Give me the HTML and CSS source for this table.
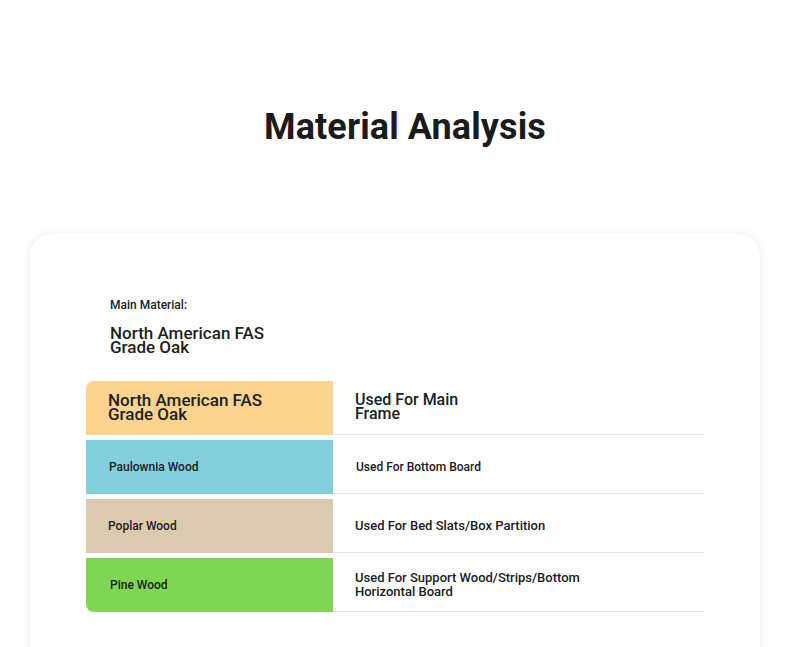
FILE: index.html
```html
<!DOCTYPE html>
<html lang="en">
<head>
<meta charset="utf-8">
<title>Material Analysis</title>
<link rel="stylesheet" href="styles.css">
</head>
<body>
<header class="hero">
  <h1 class="hero-title">Material Analysis</h1>
</header>
<section class="card">
  <div class="main">
    <p class="main-label">Main Material:</p>
    <p class="main-name">North American FAS<br>Grade Oak</p>
  </div>
  <div class="table">
    <div class="row">
      <div class="swatch swatch-oak big">North American FAS<br>Grade Oak</div>
      <div class="use use-main">Used For Main<br>Frame</div>
    </div>
    <div class="row">
      <div class="swatch swatch-paulownia">Paulownia Wood</div>
      <div class="use use-shift">Used For Bottom Board</div>
    </div>
    <div class="row">
      <div class="swatch swatch-poplar">Poplar Wood</div>
      <div class="use use-lg">Used For Bed Slats/Box Partition</div>
    </div>
    <div class="row">
      <div class="swatch swatch-pine">Pine Wood</div>
      <div class="use use-lg">Used For Support Wood/Strips/Bottom<br>Horizontal Board</div>
    </div>
  </div>
</section>
</body>
</html>
```
FILE: styles.css
```css
* { box-sizing: border-box; }
html, body { margin: 0; padding: 0; background: #ffffff; }
body {
  font-family: Roboto, "Liberation Sans", Arial, sans-serif;
  color: #1e1e1e;
  overflow: hidden;
}
.hero {
  padding-top: 106px;
  padding-left: 20px;
  height: 234px;
  text-align: center;
}
.hero-title {
  margin: 0;
  font-size: 36px;
  line-height: 43px;
  font-weight: 700;
  color: #1b1b1b;
  letter-spacing: 0.1px;
}
.card {
  margin: 0 30px;
  background: #fff;
  border-radius: 22px;
  box-shadow: 0 0 10px rgba(0, 0, 0, 0.09);
  padding: 63px 55px 60px 56px;
  height: 480px;
}
.main {
  padding-left: 24px;
}
.main-label {
  margin: 0;
  font-size: 12px;
  line-height: 16px;
  font-weight: 500;
  color: #222;
}
.main-name {
  margin: 13px 0 0;
  font-size: 17px;
  line-height: 14px;
  font-weight: 500;
  color: #1e1e1e;
}
.table {
  margin-top: 27px;
  display: flex;
  flex-direction: column;
  gap: 5px;
}
.row {
  display: grid;
  grid-template-columns: 247px 1fr;
  min-height: 54px;
}
.swatch {
  display: flex;
  align-items: center;
  padding: 0 22px;
  font-size: 12px;
  line-height: 14px;
  font-weight: 500;
  color: #1f2020;
}
.use {
  display: flex;
  align-items: center;
  padding: 0 22px;
  font-size: 12px;
  line-height: 14px;
  font-weight: 500;
  color: #202020;
  border-bottom: 1px solid #e4e4e4;
}
.use-main {
  font-size: 16px;
  line-height: 14px;
  padding-bottom: 1px;
}
.use-shift { padding-left: 23px; }
.use-lg { font-size: 13px; line-height: 14px; }
.big {
  font-size: 17px;
  line-height: 14px;
}
.swatch.big { padding-bottom: 3px; }
.swatch-oak { background: #fcd48f; border-top-left-radius: 8px; }
.swatch-paulownia { background: #83cfdc; padding-left: 23px; }
.swatch-poplar { background: #dccab0; }
.swatch-pine { background: #7ed654; border-bottom-left-radius: 8px; color: #1a2418; padding-left: 24px; }
```
